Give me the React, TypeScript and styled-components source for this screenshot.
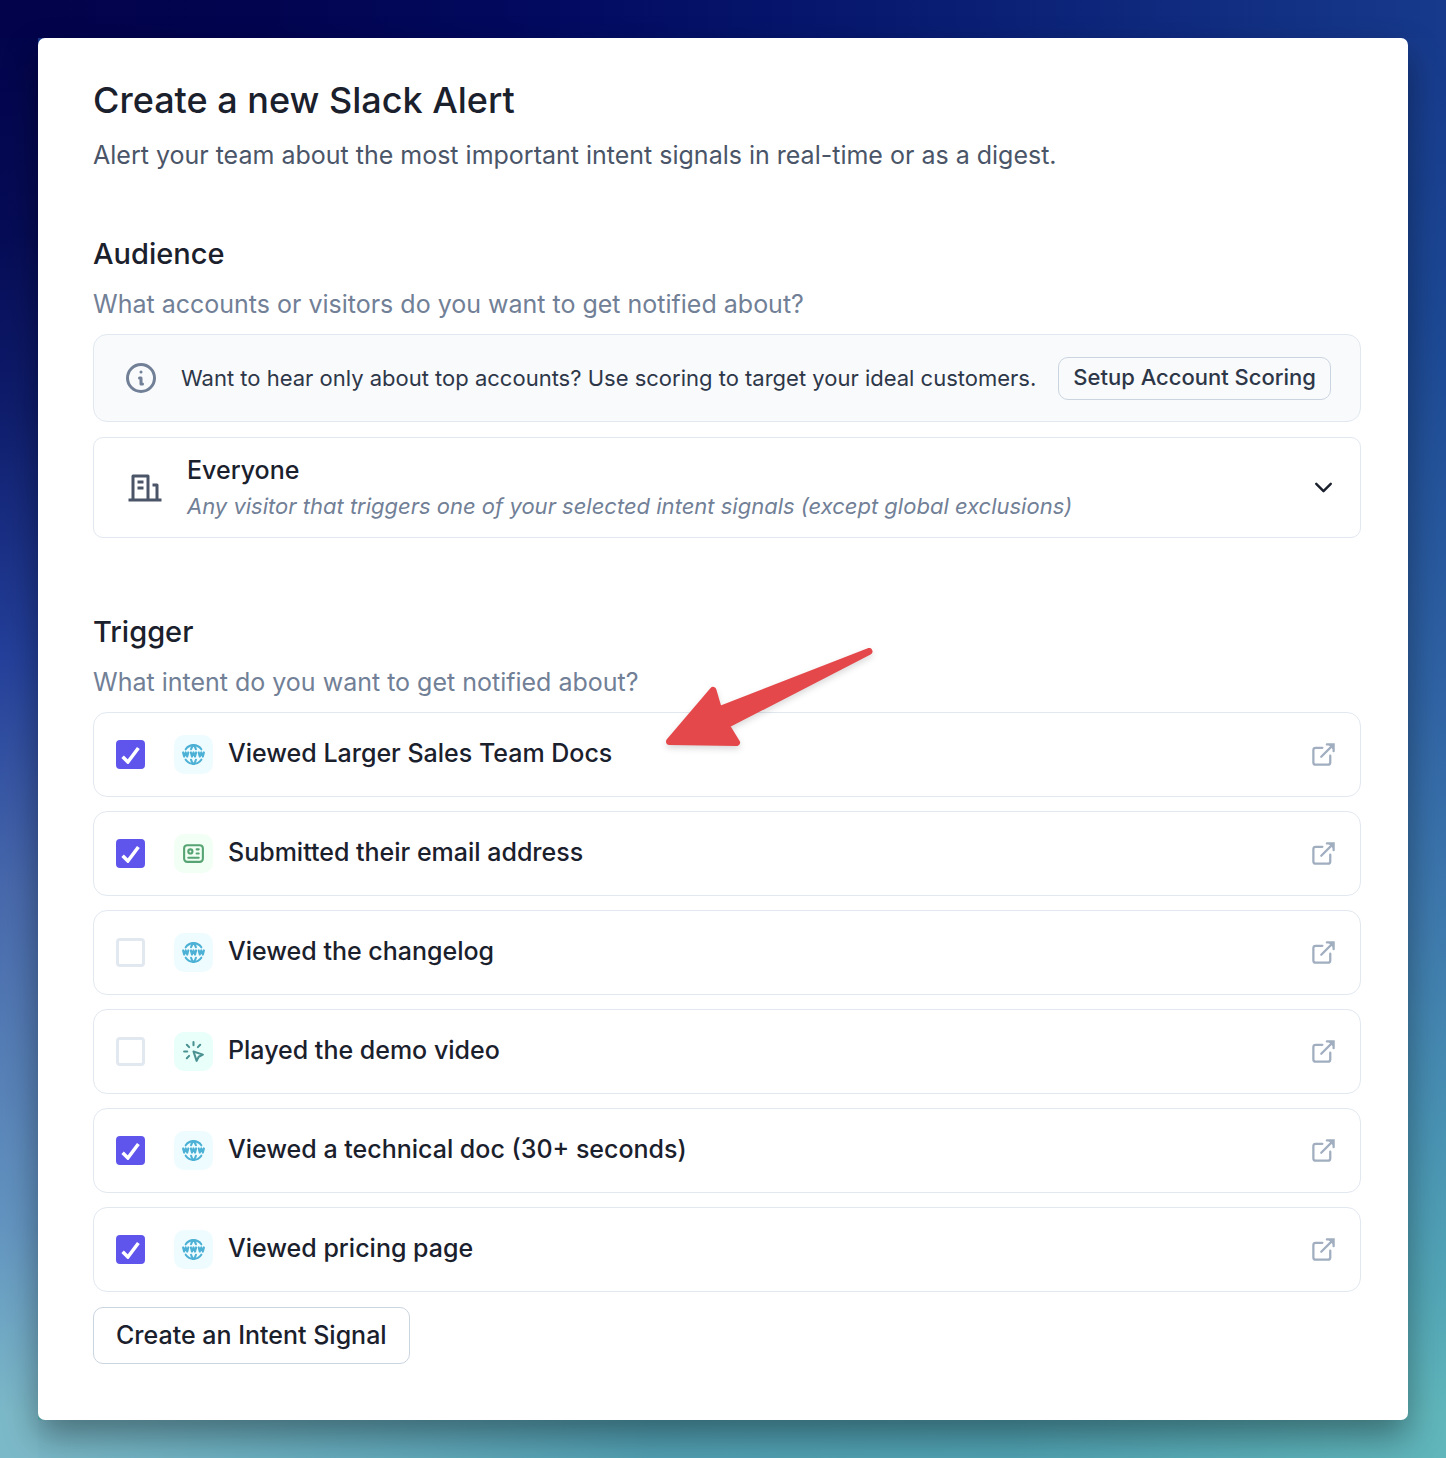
import React, { useId, useState } from "react";
import styled, { createGlobalStyle } from "styled-components";

const GlobalStyle = createGlobalStyle`
  *, *::before, *::after { box-sizing: border-box; }
  body {
    margin: 0;
    font-family: Inter, "Liberation Sans", sans-serif;
    font-optical-sizing: none;
    color: #1a202c;
    -webkit-font-smoothing: antialiased;
  }
  h1, h2, p, ul { margin: 0; padding: 0; }
  button { font: inherit; color: inherit; cursor: pointer; }
  svg { display: block; flex: none; }
`;

const Backdrop = styled.main`
  min-height: 100vh;
  padding: 38px;
  background:
    linear-gradient(to right, #02034a 0%, #02044f 18%, #020a60 38%, #07196f 60%, #173a8c 100%) 0 0 / 100% 38px no-repeat,
    linear-gradient(180deg, #02034a 0%, #060c56 16%, #0f1d6c 28%, #24409a 45%, #4869ac 61%, #6394c0 84%, #7cb9c8 97%) 0 0 / 38px 100% no-repeat,
    linear-gradient(to right, #7cb9c8, #519fb2 45%, #50a2b2 70%, #60b6bb) 0 100% / 100% 38px no-repeat,
    linear-gradient(180deg, #173a8c 2%, #1c4894 22%, #3064a5 48%, #3f7bae 64%, #4890b3 76%, #52a5b6 88%, #60b6bb 97%);
`;

const Card = styled.form`
  display: flex;
  flex-direction: column;
  padding: 40px 47px 56px 55px;
  border-radius: 7px;
  background: #fff;
  box-shadow: 0 16px 34px rgba(0, 0, 0, 0.38);
`;

const Title = styled.h1`
  font-size: 36px;
  line-height: 44px;
  font-weight: 500;
`;

const Lead = styled.p`
  margin-top: 15px;
  font-size: 25px;
  line-height: 36px;
  color: #4a5568;
`;

const Section = styled.section<{ $space: number }>`
  display: flex;
  flex-direction: column;
  margin-top: ${(p) => p.$space}px;
`;

const SectionTitle = styled.h2`
  font-size: 29px;
  line-height: 36px;
  font-weight: 500;
`;

const SectionHint = styled.p`
  margin: 16px 0 14px;
  font-size: 25px;
  line-height: 32px;
  color: #718096;
`;

const Notice = styled.div`
  display: flex;
  align-items: center;
  gap: 22px;
  min-height: 88px;
  padding: 0 29px;
  border: 1px solid #e2e8f0;
  border-radius: 14px;
  background: #f9fafc;
  color: #718096;
`;

const NoticeText = styled.p`
  flex: 1;
  font-size: 22px;
  line-height: 32px;
  color: #2d3748;
`;

const OutlineButton = styled.button<{ $large?: boolean }>`
  flex: none;
  align-self: ${(p) => (p.$large ? "flex-start" : "center")};
  height: ${(p) => (p.$large ? 57 : 43)}px;
  padding: 0 ${(p) => (p.$large ? 22 : 14)}px 2px;
  border: 1px solid #cbd5e0;
  border-radius: 10px;
  background: transparent;
  font-size: ${(p) => (p.$large ? 25 : 22)}px;
  line-height: 32px;
  font-weight: 500;
  color: ${(p) => (p.$large ? "#1a202c" : "#2d3748")};
`;

const AudienceSelect = styled.button`
  display: flex;
  align-items: center;
  gap: 24px;
  min-height: 101px;
  margin-top: 15px;
  padding: 0 22px 0 33px;
  border: 1px solid #e2e8f0;
  border-radius: 10px;
  background: #fff;
  text-align: left;
`;

const AudienceText = styled.span`
  display: flex;
  flex: 1;
  flex-direction: column;
  gap: 4px;
`;

const AudienceName = styled.span`
  font-size: 25px;
  line-height: 32px;
  font-weight: 500;
`;

const AudienceDetail = styled.span`
  font-size: 22px;
  line-height: 32px;
  font-style: italic;
  color: #718096;
`;

const SignalList = styled.ul`
  display: flex;
  flex-direction: column;
  gap: 14px;
  margin-bottom: 15px;
  list-style: none;
`;

const SignalRow = styled.li`
  position: relative;
  display: flex;
  align-items: center;
  min-height: 85px;
  padding: 0 23px 0 22px;
  border: 1px solid #e2e8f0;
  border-radius: 14px;
`;

const CheckWrap = styled.span`
  display: grid;
  place-items: center;
  margin-right: 29px;

  > * { grid-area: 1 / 1; }
  > svg { pointer-events: none; }
`;

const CheckInput = styled.input`
  appearance: none;
  width: 29px;
  height: 29px;
  margin: 0;
  border: 3px solid #e2e8f0;
  border-radius: 4px;
  background: #fff;
  cursor: pointer;

  &:checked { border-color: #5f55ec; background: #5f55ec; }
`;

const IconTile = styled.span<{ $bg: string; $fg: string }>`
  display: grid;
  place-items: center;
  width: 39px;
  height: 39px;
  margin-right: 15px;
  border-radius: 10px;
  background: ${(p) => p.$bg};
  color: ${(p) => p.$fg};
`;

const SignalLabel = styled.label`
  flex: 1;
  padding-bottom: 3px;
  font-size: 25px;
  line-height: 32px;
  font-weight: 500;
  cursor: pointer;
`;

const OpenLink = styled.a`
  color: #a0aec0;
`;

const Pointer = styled.svg`
  position: absolute;
  top: -73px;
  left: 562px;
  pointer-events: none;
  filter: drop-shadow(0 3px 3px rgba(0, 0, 0, 0.15));
`;

const Stroked = ({ size, children }: { size: number; children: React.ReactNode }) => (
  <svg width={size} height={size} viewBox="0 0 24 24" fill="none" stroke="currentColor"
    strokeWidth="2" strokeLinecap="round" strokeLinejoin="round" aria-hidden="true">
    {children}
  </svg>
);

const InfoIcon = () => (
  <Stroked size={36}>
    <circle cx="12" cy="12" r="9" />
    <path d="M12 8h.01M11 12h1v4h1" />
  </Stroked>
);

const BuildingIcon = () => (
  <svg width="36" height="36" viewBox="0 0 24 24" fill="#4a5568" aria-hidden="true">
    <path d="M21 19h2v2H1v-2h2V4a1 1 0 0 1 1-1h10a1 1 0 0 1 1 1v15h4v-8h-2V9h3a1 1 0 0 1 1 1v9zM5 5v14h8V5H5zm2 6h4v2H7v-2zm0-4h4v2H7V7z" />
  </svg>
);

const ChevronIcon = () => (
  <Stroked size={29}>
    <path d="M6 9l6 6 6-6" />
  </Stroked>
);

const WebIcon = () => (
  <Stroked size={25}>
    <path d="M19.5 7A9 9 0 0 0 12 3a8.991 8.991 0 0 0-7.484 4" />
    <path d="M11.5 3a16.989 16.989 0 0 0-1.826 4M12.5 3a16.989 16.989 0 0 1 1.828 4" />
    <path d="M19.5 17a9 9 0 0 1-7.5 4 8.991 8.991 0 0 1-7.484-4" />
    <path d="M11.5 21a16.989 16.989 0 0 1-1.826-4M12.5 21a16.989 16.989 0 0 0 1.828-4" />
    <path d="M2 10l1 4 1.5-4L6 14l1-4M17 10l1 4 1.5-4 1.5 4 1-4M9.5 10l1 4 1.5-4 1.5 4 1-4" />
  </Stroked>
);

const FormIcon = () => (
  <Stroked size={25}>
    <rect x="3" y="4" width="18" height="16" rx="3" />
    <circle cx="9" cy="10" r="2" />
    <path d="M15 8h2M15 12h2M7 16h10" />
  </Stroked>
);

const ClickIcon = () => (
  <Stroked size={25}>
    <path d="M3 12h3M12 3v3M7.8 7.8L5.6 5.6M16.2 7.8l2.2-2.2M7.8 16.2l-2.2 2.2M12 12l9 3-4 2-2 4z" />
  </Stroked>
);

const ExternalIcon = () => (
  <svg width="27" height="27" viewBox="0 0 24 24" fill="none" stroke="currentColor"
    strokeWidth="2" strokeLinecap="round" aria-hidden="true">
    <path d="M18 13v6a2 2 0 0 1-2 2H5a2 2 0 0 1-2-2V8a2 2 0 0 1 2-2h6M15 3h6v6M10 14L21 3" />
    <path d="M16 3h5v5z" fill="currentColor" stroke="none" />
  </svg>
);

const kinds = {
  page: { bg: "#effcff", fg: "#4db1d5", Icon: WebIcon },
  form: { bg: "#f2fff4", fg: "#56a373", Icon: FormIcon },
  click: { bg: "#e8fffa", fg: "#4a9191", Icon: ClickIcon },
};

type SignalData = { name: string; kind: keyof typeof kinds; on: boolean; highlighted?: boolean };

const signals: SignalData[] = [
  { name: "Viewed Larger Sales Team Docs", kind: "page", on: true, highlighted: true },
  { name: "Submitted their email address", kind: "form", on: true },
  { name: "Viewed the changelog", kind: "page", on: false },
  { name: "Played the demo video", kind: "click", on: false },
  { name: "Viewed a technical doc (30+ seconds)", kind: "page", on: true },
  { name: "Viewed pricing page", kind: "page", on: true },
];

function Signal({ name, kind, on, highlighted }: SignalData) {
  const id = useId();
  const [checked, setChecked] = useState(on);
  const { bg, fg, Icon } = kinds[kind];
  return (
    <SignalRow>
      <CheckWrap>
        <CheckInput id={id} type="checkbox" checked={checked} onChange={() => setChecked(!checked)} />
        {checked && (
          <svg width="21" height="18" viewBox="0 0 12 10" fill="none" stroke="#fff" strokeWidth="2" aria-hidden="true">
            <path d="M1.5 6l3 3 6-8" />
          </svg>
        )}
      </CheckWrap>
      <IconTile $bg={bg} $fg={fg}><Icon /></IconTile>
      <SignalLabel htmlFor={id}>{name}</SignalLabel>
      <OpenLink href="#" aria-label={`Open ${name}`}><ExternalIcon /></OpenLink>
      {highlighted && (
        <Pointer width="230" height="120" viewBox="0 0 230 120" aria-hidden="true">
          <path d="M13.5 101.5L57 50.5L62.7 70L213 11.5L69.8 85.2L80.5 102.5Z"
            fill="#e5484b" stroke="#e5484b" strokeWidth="7" strokeLinejoin="round" />
        </Pointer>
      )}
    </SignalRow>
  );
}

export default function App() {
  return (
    <>
      <GlobalStyle />
      <Backdrop>
        <Card onSubmit={(e) => e.preventDefault()}>
          <Title>Create a new Slack Alert</Title>
          <Lead>Alert your team about the most important intent signals in real-time or as a digest.</Lead>

          <Section $space={63}>
            <SectionTitle>Audience</SectionTitle>
            <SectionHint>What accounts or visitors do you want to get notified about?</SectionHint>
            <Notice>
              <InfoIcon />
              <NoticeText>Want to hear only about top accounts? Use scoring to target your ideal customers.</NoticeText>
              <OutlineButton type="button">Setup Account Scoring</OutlineButton>
            </Notice>
            <AudienceSelect type="button" aria-haspopup="listbox">
              <BuildingIcon />
              <AudienceText>
                <AudienceName>Everyone</AudienceName>
                <AudienceDetail>Any visitor that triggers one of your selected intent signals (except global exclusions)</AudienceDetail>
              </AudienceText>
              <ChevronIcon />
            </AudienceSelect>
          </Section>

          <Section $space={76}>
            <SectionTitle>Trigger</SectionTitle>
            <SectionHint>What intent do you want to get notified about?</SectionHint>
            <SignalList>
              {signals.map((s) => <Signal key={s.name} {...s} />)}
            </SignalList>
            <OutlineButton type="button" $large>Create an Intent Signal</OutlineButton>
          </Section>
        </Card>
      </Backdrop>
    </>
  );
}
